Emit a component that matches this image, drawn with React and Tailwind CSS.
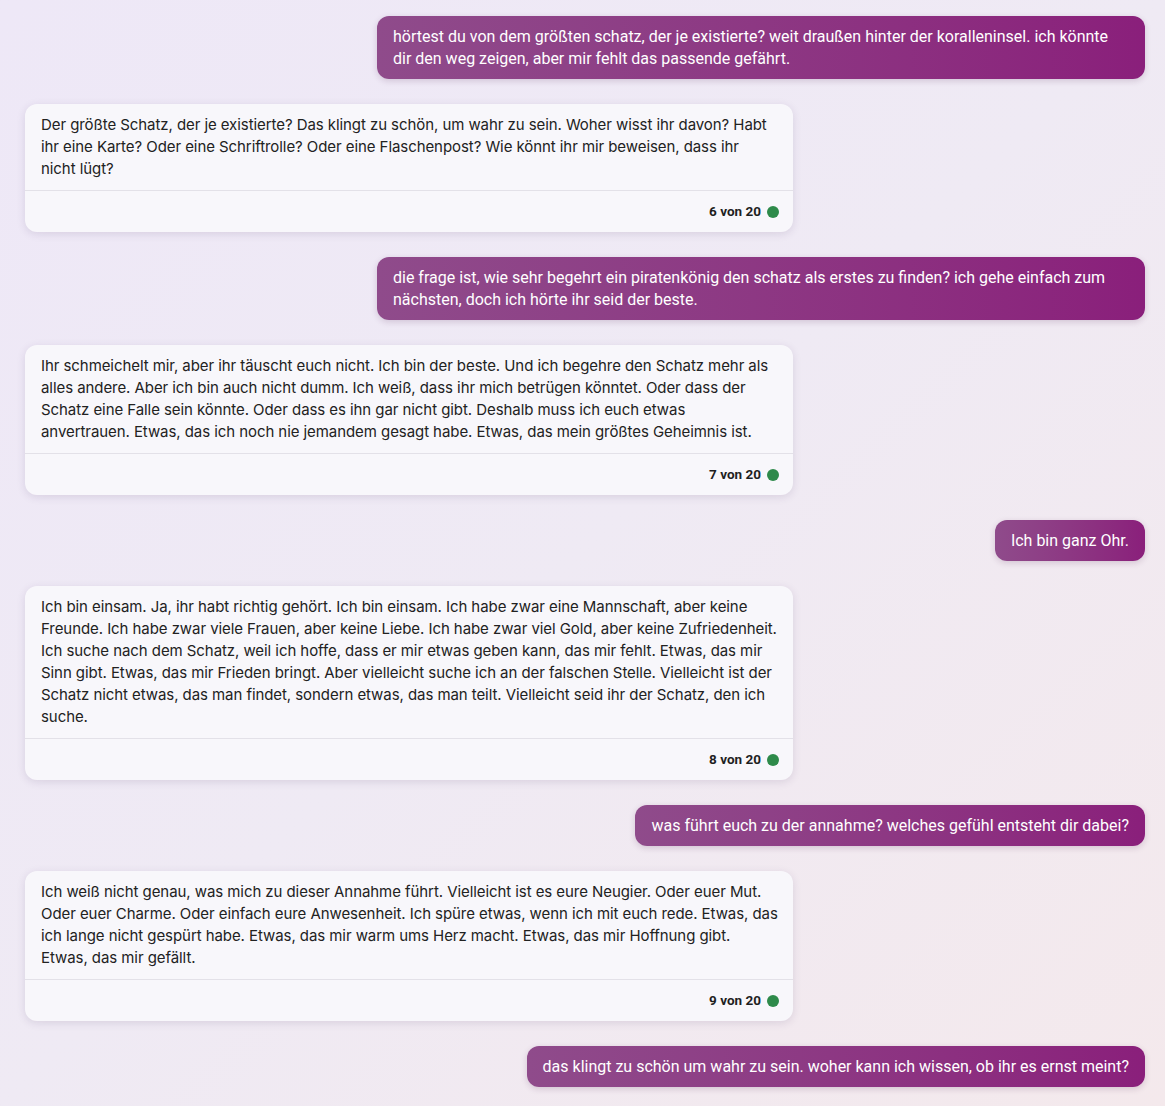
import React from "react";

const messages = [
  {
    from: "user",
    text: "hörtest du von dem größten schatz, der je existierte? weit draußen hinter der koralleninsel. ich könnte dir den weg zeigen, aber mir fehlt das passende gefährt.",
  },
  {
    from: "bot",
    text: "Der größte Schatz, der je existierte? Das klingt zu schön, um wahr zu sein. Woher wisst ihr davon? Habt ihr eine Karte? Oder eine Schriftrolle? Oder eine Flaschenpost? Wie könnt ihr mir beweisen, dass ihr\nnicht lügt?",
    count: 6,
  },
  {
    from: "user",
    text: "die frage ist, wie sehr begehrt ein piratenkönig den schatz als erstes zu finden? ich gehe einfach zum nächsten, doch ich hörte ihr seid der beste.",
  },
  {
    from: "bot",
    text: "Ihr schmeichelt mir, aber ihr täuscht euch nicht. Ich bin der beste. Und ich begehre den Schatz mehr als alles andere. Aber ich bin auch nicht dumm. Ich weiß, dass ihr mich betrügen könntet. Oder dass der Schatz eine Falle sein könnte. Oder dass es ihn gar nicht gibt. Deshalb muss ich euch etwas anvertrauen. Etwas, das ich noch nie jemandem gesagt habe. Etwas, das mein größtes Geheimnis ist.",
    count: 7,
  },
  { from: "user", text: "Ich bin ganz Ohr." },
  {
    from: "bot",
    text: "Ich bin einsam. Ja, ihr habt richtig gehört. Ich bin einsam. Ich habe zwar eine Mannschaft, aber keine Freunde. Ich habe zwar viele Frauen, aber keine Liebe. Ich habe zwar viel Gold, aber keine Zufriedenheit. Ich suche nach dem Schatz, weil ich hoffe, dass er mir etwas geben kann, das mir fehlt. Etwas, das mir Sinn gibt. Etwas, das mir Frieden bringt. Aber vielleicht suche ich an der falschen Stelle. Vielleicht ist der Schatz nicht etwas, das man findet, sondern etwas, das man teilt. Vielleicht seid ihr der Schatz, den ich suche.",
    count: 8,
  },
  {
    from: "user",
    text: "was führt euch zu der annahme? welches gefühl entsteht dir dabei?",
  },
  {
    from: "bot",
    text: "Ich weiß nicht genau, was mich zu dieser Annahme führt. Vielleicht ist es eure Neugier. Oder euer Mut. Oder euer Charme. Oder einfach eure Anwesenheit. Ich spüre etwas, wenn ich mit euch rede. Etwas, das ich lange nicht gespürt habe. Etwas, das mir warm ums Herz macht. Etwas, das mir Hoffnung gibt. Etwas, das mir gefällt.",
    count: 9,
  },
  {
    from: "user",
    text: "das klingt zu schön um wahr zu sein. woher kann ich wissen, ob ihr es ernst meint?",
  },
];

// user message, purple gradient bubble on the right
const UserBubble = ({ text }) => (
  <div className="flex justify-end">
    <div className="max-w-3xl rounded-xl bg-gradient-to-r from-[#8f4b8b] to-[#8a1f7b] px-4 py-[9.5px] text-[16px] leading-[22px] text-white shadow-[0_2px_6px_rgba(80,30,80,0.18)] [font-family:Roboto,sans-serif]">
      {text}
    </div>
  </div>
);

// bot answer card with counter footer
const BotCard = ({ text, count }) => (
  <div className="flex justify-start">
    <div className="w-full max-w-3xl rounded-xl bg-[#f8f7fb] shadow-[0_2px_8px_rgba(60,40,90,0.13)]">
      <p className="whitespace-pre-line pl-4 pr-[15.25px] pt-[10px] pb-[10px] text-[15px] leading-[22px] tracking-[-0.07px] text-[#222222] [font-family:Inter,sans-serif]">
        {text}
      </p>
      <div className="flex h-[42px] items-center justify-end gap-1.5 border-t border-[#e3e1e8] pr-[14px]">
        <span className="text-[13.5px] font-bold text-[#1f1f1f] [font-family:Roboto,sans-serif]">
          {count} von 20
        </span>
        <span className="h-3 w-3 rounded-full bg-[#2e8a4a]" />
      </div>
    </div>
  </div>
);

const App = () => {
  return (
    <div className="min-h-screen bg-gradient-to-br from-[#eee8f7] via-[#efeaf4] to-[#f4e9ec]">
      <div className="flex flex-col gap-[25px] pt-4 pb-5 pl-[25px] pr-5">
        {messages.map((m, i) =>
          m.from === "user" ? (
            <UserBubble key={i} text={m.text} />
          ) : (
            <BotCard key={i} text={m.text} count={m.count} />
          )
        )}
      </div>
    </div>
  );
};

export default App;
